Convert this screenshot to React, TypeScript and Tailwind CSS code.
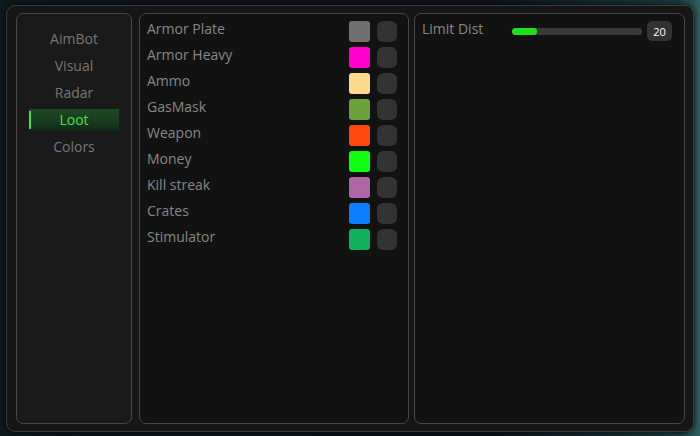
import React from 'react'

const navItems = ['AimBot', 'Visual', 'Radar', 'Loot', 'Colors']

const loot = [
  { name: 'Armor Plate', color: '#707070' },
  { name: 'Armor Heavy', color: '#ff00cc' },
  { name: 'Ammo', color: '#ffd98e' },
  { name: 'GasMask', color: '#6aa23e' },
  { name: 'Weapon', color: '#ff4710' },
  { name: 'Money', color: '#12ff12' },
  { name: 'Kill streak', color: '#b066a6' },
  { name: 'Crates', color: '#0a7fff' },
  { name: 'Stimulator', color: '#10b05c' },
]

export default function App() {
  const active = 'Loot'
  const dist = 20
  const pct = 19

  return (
    <div
      className="w-[700px] h-[436px] overflow-hidden pt-[5px] pl-[6px] bg-[linear-gradient(90deg,#0c1a1d_0%,#0d141a_20%,#0d1319_70%,#1c3c40_97%,#2f6062_100%)]"
      style={{ fontFamily: '"Open Sans", "Noto Sans", sans-serif' }}
    >
      <div className="w-[688px] h-[427px] flex rounded-[9px] border border-[#3b3b3b] bg-[#161616] pt-[7px] pl-[9px] pr-[8px] shadow-[0_0_6px_rgba(0,0,0,0.8)]">
        {/* Tabs */}
        <div className="w-[116px] h-[411px] shrink-0 rounded-[7px] border border-[#474747] bg-[#1a1a1a] pt-[14px] px-[12px] flex flex-col gap-[5px]">
          {navItems.map((item) => {
            const isActive = item === active
            return (
              <div
                key={item}
                className={`relative h-[22px] flex items-center justify-center text-[14px] leading-none ${
                  isActive
                    ? 'text-[#45e045] bg-[linear-gradient(180deg,#1f4a24_0%,#173a1b_60%,#12291a_100%)]'
                    : 'text-[#767676]'
                }`}
              >
                {isActive && <div className="absolute left-0 top-[2px] bottom-[2px] w-[2px] bg-[#45e045]" />}
                {item}
              </div>
            )
          })}
        </div>

        {/* Loot list */}
        <div className="ml-[7px] w-[270px] h-[411px] shrink-0 rounded-[7px] border border-[#474747] bg-[#121212] pt-[7px] pl-[7px] pr-[11px] flex flex-col gap-[5px]">
          {loot.map((l) => (
            <div key={l.name} className="h-[21px] flex items-center">
              <span className="flex-1 text-[14px] leading-none text-[#878787] -mt-[6px]">{l.name}</span>
              <div className="w-[21px] h-[21px] rounded-[3px]" style={{ backgroundColor: l.color }} />
              <div className="w-[20px] h-[21px] ml-[7px] rounded-[6px] bg-[#333333]" />
            </div>
          ))}
        </div>

        {/* Settings */}
        <div className="ml-[5px] w-[271px] h-[411px] shrink-0 rounded-[7px] border border-[#474747] bg-[#121212] pt-[7px] pl-[7px] pr-[11px]">
          <div className="h-[20px] flex items-center">
            <span className="w-[90px] text-[14px] leading-none text-[#878787] -mt-[4px]">Limit Dist</span>
            <div className="w-[130px] h-[7px] rounded-[3px] bg-[#3a3a3a] overflow-hidden">
              <div className="h-full rounded-[3px] bg-[#1fe21f]" style={{ width: `${pct}%` }} />
            </div>
            <div className="ml-[5px] w-[25px] h-[20px] rounded-[5px] bg-[#333333] flex items-center justify-center text-[11px] leading-none text-white">
              {dist}
            </div>
          </div>
        </div>
      </div>
    </div>
  )
}
